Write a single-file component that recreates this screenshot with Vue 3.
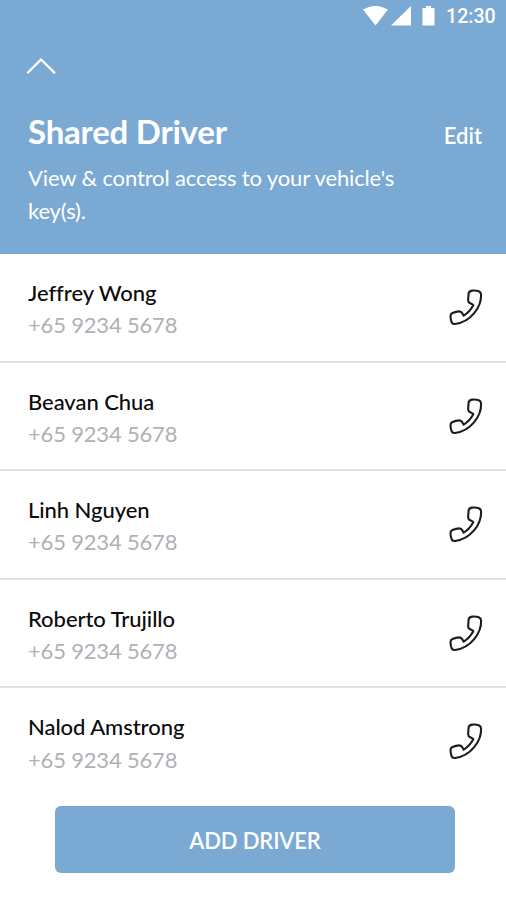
<template>
  <div class="screen">
    <header class="header">
      <div class="status-bar">
        <svg class="status-icons" width="74" height="22" viewBox="0 0 74 22">
          <path d="M0 3.6 Q12.5 -3.8 25 3.6 L12.5 19.6 Z" />
          <path d="M48 0 V19.6 H28 Z" />
          <path d="M59.5 2 H63 V0 H68 V2 H71.5 V19.6 H59.5 Z" />
        </svg>
        <span class="clock">12:30</span>
      </div>
      <button class="btn-collapse" aria-label="Collapse">
        <svg width="30" height="18" viewBox="0 0 30 18">
          <path d="M2 15.6 L15 2.5 L28.4 15.6" />
        </svg>
      </button>
      <div class="title-row">
        <h1 class="title">Shared Driver</h1>
        <button class="btn-edit">Edit</button>
      </div>
      <p class="subtitle">View &amp; control access to your vehicle's key(s).</p>
    </header>

    <ul class="drivers">
      <li v-for="d in drivers" :key="d.name" class="driver">
        <div class="driver-info">
          <span class="driver-name">{{ d.name }}</span>
          <span class="driver-phone">{{ d.phone }}</span>
        </div>
        <a class="call" :href="`tel:${d.phone}`" :aria-label="`Call ${d.name}`">
          <svg width="36" height="38" viewBox="0 0 36 38">
            <path d="M20.6 4.6 C20.9 2.7 22 1.8 24 1.6 C26.3 1.4 28.8 1.5 30.8 2.2 C32.4 2.8 33 4 33.1 5.6 C33.3 12 30.6 18.8 26.2 24.2 C21.4 30 14.2 34.2 7 35 C5.2 35.2 4.1 34.7 3.6 33.2 C2.9 31.2 2.5 28.8 2.5 26.9 C2.5 25.3 3.2 24.6 4.5 24 C6.7 23 9 22.4 11.3 22.4 C13.2 22.4 13.8 23.3 14.5 24.6 L15.7 26.6 C19.4 24.3 22.9 20.6 25.3 16.2 C24.8 15 23.6 14.9 22.3 14.3 C20.8 13.7 20.1 13 20.1 11.3 Z" />
          </svg>
        </a>
      </li>
    </ul>

    <div class="footer">
      <button class="btn-add">ADD DRIVER</button>
    </div>
  </div>
</template>

<script setup>
import { ref } from 'vue';

const drivers = ref([
  { name: 'Jeffrey Wong', phone: '+65 9234 5678' },
  { name: 'Beavan Chua', phone: '+65 9234 5678' },
  { name: 'Linh Nguyen', phone: '+65 9234 5678' },
  { name: 'Roberto Trujillo', phone: '+65 9234 5678' },
  { name: 'Nalod Amstrong', phone: '+65 9234 5678' }
]);
</script>

<style>
body {
  margin: 0;
  background: #fff;
}
</style>

<style scoped>
.screen {
  width: 506px;
  height: 900px;
  overflow: hidden;
  background: #fff;
  font-family: Lato, sans-serif;
}
button {
  padding: 0;
  border: none;
  background: none;
  color: inherit;
  font-family: inherit;
}
.header {
  height: 254px;
  box-sizing: border-box;
  background: #7aaad3;
  color: #fff;
}
.status-bar {
  display: flex;
  justify-content: flex-end;
  height: 32px;
  box-sizing: border-box;
  padding: 6px 10px 0 0;
}
.status-icons {
  margin-right: 9px;
  fill: #fff;
}
.clock {
  width: 50px;
  font-family: Roboto, sans-serif;
  font-size: 19.6px;
  font-weight: 500;
  line-height: 21px;
  white-space: nowrap;
}
.btn-collapse {
  display: block;
  margin: 25px 0 0 26px;
}
.btn-collapse svg {
  display: block;
  fill: none;
  stroke: #fff;
  stroke-width: 2.2;
  stroke-linecap: round;
}
.title-row {
  display: flex;
  justify-content: space-between;
  align-items: baseline;
  margin-top: 36px;
  padding: 0 24px 0 28px;
}
.title {
  margin: 0;
  font-size: 33px;
  font-weight: 700;
  letter-spacing: -0.23px;
  line-height: 40px;
}
.btn-edit {
  font-size: 22px;
  font-weight: 600;
}
.subtitle {
  width: 400px;
  margin: 10px 0 0 28px;
  font-size: 22px;
  letter-spacing: -0.14px;
  line-height: 33px;
}
.drivers {
  margin: 0;
  padding: 0;
  list-style: none;
}
.driver {
  display: flex;
  justify-content: space-between;
  height: 108.6px;
  box-sizing: border-box;
  padding: 23px 22px 0 28px;
  border-bottom: 2px solid #e1e1e1;
}
.driver:last-child {
  border-bottom: none;
}
.driver-info {
  display: flex;
  flex-direction: column;
}
.driver-name,
.driver-phone {
  font-size: 22px;
  line-height: 32.2px;
}
.driver-name {
  color: #0b0b0d;
  font-weight: 500;
  letter-spacing: -0.05px;
}
.driver-phone {
  color: #b0b0b6;
  letter-spacing: -0.18px;
}
.call {
  margin-top: 12px;
}
.call svg {
  display: block;
  fill: none;
  stroke: #1c1c1c;
  stroke-width: 2.1;
  stroke-linejoin: round;
}
.footer {
  display: flex;
  justify-content: center;
  padding: 9px 0 0 3px;
}
.btn-add {
  width: 400px;
  height: 67px;
  padding: 3px 0 0 1px;
  border-radius: 6px;
  background: #7aaad3;
  color: #fff;
  font-size: 22px;
  font-weight: 600;
  letter-spacing: -0.15px;
}
</style>
